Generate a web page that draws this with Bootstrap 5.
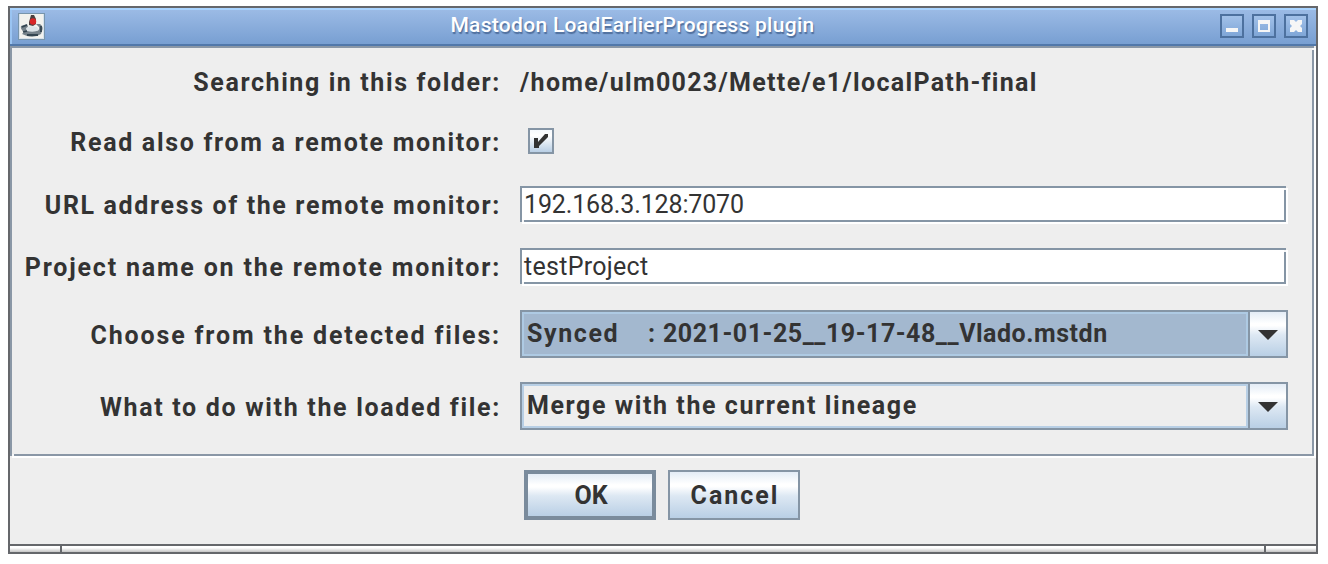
<!DOCTYPE html>
<html lang="en">
<head>
<meta charset="utf-8">
<title>Mastodon LoadEarlierProgress plugin</title>
<link href="https://cdn.jsdelivr.net/npm/bootstrap@5.3.0/dist/css/bootstrap.min.css" rel="stylesheet">
<style>
:root{--edge:#8595a5;--face:#eee;--metal:linear-gradient(#e3ecf6 0,#fff 26%,#fff 31%,#dde8f3 52%,#b9cfe5 100%)}
body{background:#fff;padding:6px 10px 0 8px;height:564px;overflow:hidden;font-family:Roboto,sans-serif;font-size:25px;line-height:30px;font-weight:700;color:#333}
.window{width:1310px;height:548px;border:2px solid #65676b;background:var(--face)}
.titlebar{height:38px;flex:none;background:linear-gradient(#9dbce6,#789fd2);border-bottom:2px solid #5178aa;box-shadow:inset 0 2px #a8d3ff,inset 2px 0 #9ac4f2;padding:0 8px}
.caption{font-size:21px;font-weight:500;line-height:24px;letter-spacing:.3px;color:#fff;text-shadow:1px 2px 1px #4f6f9d;padding:0 0 2px}
.winbtn{width:24px;height:24px;border:2px solid #4d719f;background:linear-gradient(#a2c1e9,#7fa6d7);display:block}
.winbtn svg,.appicon{display:block}
.panel{height:410px;flex:none;border:2px solid #8a97a6;margin-right:2px;box-shadow:2px 2px #fff}
/* Etched borders leave a light notch at two corners */
.etched{position:relative}
.etched::before,.etched::after{content:"";position:absolute;width:2px;height:2px;background:#f6f7f8}
.etched::before{left:0;bottom:-2px}
.etched::after{right:-2px;top:0}
.formrow{display:grid;grid-template-columns:489px 768px;column-gap:19px;align-items:center}
.formrow label{text-align:right;white-space:nowrap}
.low{padding-top:3px}
.field{width:766px;height:36px;border:2px solid var(--edge);background:#fff;box-shadow:2px 2px #fff;font-weight:400;padding:2px 0 0 2px;line-height:30px}
.combo{height:48px;border:2px solid var(--edge);background:var(--face)}
.combo-value{box-shadow:inset 0 0 0 2px #b8cfe5;padding:0 0 1px 5px}
.chosen .combo-value{background:#a3b8cf;box-shadow:inset 0 0 0 2px #aecae3}
.combo-arrow{width:38px;border-left:2px solid var(--edge);background:var(--metal);padding-top:2px}
.tick{width:26px;height:26px;border:2px solid var(--edge);background:linear-gradient(#f5f9fd,#fff 25%,#b9cfe5);margin-left:8px}
.push{width:132px;height:50px;border:2px solid var(--edge);border-radius:0;background:var(--metal);font-weight:700;font-size:25px;line-height:30px;color:#333;padding:1px 0 0 2px}
.push.default{border:4px solid #7a8b9c}
.footer-strip{height:8px;border-top:2px solid #65676b;background:linear-gradient(#fff 30%,#c4c4c4)}
.footer-strip i{height:6px;width:52px}
.footer-strip i:first-child{border-right:2px solid #65676b}
.footer-strip i:last-child{border-left:2px solid #65676b}
</style>
</head>
<body>
<main class="window d-flex flex-column">
  <header class="titlebar d-flex align-items-center">
    <svg class="appicon" width="27" height="27" viewBox="0 0 27 27">
      <rect x=".5" y=".5" width="26" height="26" fill="#d7e2ec" stroke="#7895ac"/>
      <rect x="2" y="1" width="23" height="24" fill="#f2f2ee"/>
      <path d="M3 13 9 11 10 14Q7 16 10 18L18 18Q22 17 21 14L18 11 22 11Q26 14 24 18L23 21Q17 25 9 23L4 21 6 19Q2 16 3 13Z" fill="#76828a"/>
      <path d="M8 15Q12 12 19 14L21 17Q16 20 9 18Z" fill="#dce3e7"/>
      <path d="M4 14 9 12M5 19 9 18M9 22H20M23 13V19" fill="none" stroke="#344550" stroke-width="1.8"/>
      <path d="M11 9 13 2 16 2 18 6 18 11 15 13 11 12Z" fill="#4b4140"/>
      <circle cx="15" cy="8.500" r="3.200" fill="#d92527"/>
    </svg>
    <div class="caption flex-grow-1 text-center">Mastodon LoadEarlierProgress plugin</div>
    <nav class="d-flex gap-2" aria-label="Window">
      <span class="winbtn"><svg width="20" height="20"><path d="M4 12h12v4H4z" fill="#f6f6f6"/></svg></span>
      <span class="winbtn"><svg width="20" height="20"><path d="M4 4h12v12H4zM6 8v6h8V8z" fill="#f6f6f6" fill-rule="evenodd"/></svg></span>
      <span class="winbtn"><svg width="20" height="20"><path d="M4 4h4l2 2 2-2h4v4l-2 2 2 2v4h-4l-2-2-2 2H4v-4l2-2-2-2z" fill="#f6f6f6"/></svg></span>
    </nav>
  </header>
  <section class="panel etched">
    <div class="formrow" style="height:66px"><label class="low" style="letter-spacing:1.595px">Searching in this folder:</label><span class="low" style="letter-spacing:1.31px">/home/ulm0023/Mette/e1/localPath-final</span></div>
    <div class="formrow" style="height:54px"><label class="low" style="letter-spacing:1.684px">Read also from a remote monitor:</label>
      <div class="tick"><svg class="d-block" width="22" height="22"><path d="M4 8h4v4l7-8h3v3l-9 9v2H4z" fill="#333"/></svg></div></div>
    <div class="formrow" style="height:72px"><label class="low" style="letter-spacing:1.63px">URL address of the remote monitor:</label><div class="field etched" style="letter-spacing:-.146px">192.168.3.128:7070</div></div>
    <div class="formrow" style="height:52px"><label class="low" style="letter-spacing:1.8px">Project name on the remote monitor:</label><div class="field etched" style="letter-spacing:.29px">testProject</div></div>
    <div class="formrow" style="height:84px"><label class="low" style="letter-spacing:1.84px">Choose from the detected files:</label>
      <div class="combo chosen d-flex"><div class="combo-value flex-grow-1 d-flex align-items-center"><span style="letter-spacing:1.6px;width:121px">Synced</span><span style="width:15px">:</span><span style="letter-spacing:.52px">2021-01-25__19-17-48__Vlado.mstdn</span></div>
        <div class="combo-arrow d-flex align-items-center justify-content-center"><svg width="20" height="10"><path d="M0 0h20L10 10z" fill="#333"/></svg></div></div></div>
    <div class="formrow" style="height:60px"><label class="low" style="letter-spacing:1.679px">What to do with the loaded file:</label>
      <div class="combo d-flex"><div class="combo-value flex-grow-1 d-flex align-items-center" style="letter-spacing:1.58px">Merge with the current lineage</div>
        <div class="combo-arrow d-flex align-items-center justify-content-center"><svg width="20" height="10"><path d="M0 0h20L10 10z" fill="#333"/></svg></div></div></div>
  </section>
  <div class="d-flex justify-content-center flex-grow-1" style="gap:12px;padding:14px 2px 0 0">
    <button class="btn push default">OK</button>
    <button class="btn push" style="letter-spacing:2px;padding-left:2px">Cancel</button>
  </div>
  <footer class="footer-strip d-flex justify-content-between"><i></i><i></i></footer>
</main>
<script src="https://cdn.jsdelivr.net/npm/bootstrap@5.3.0/dist/js/bootstrap.bundle.min.js"></script>
</body>
</html>
